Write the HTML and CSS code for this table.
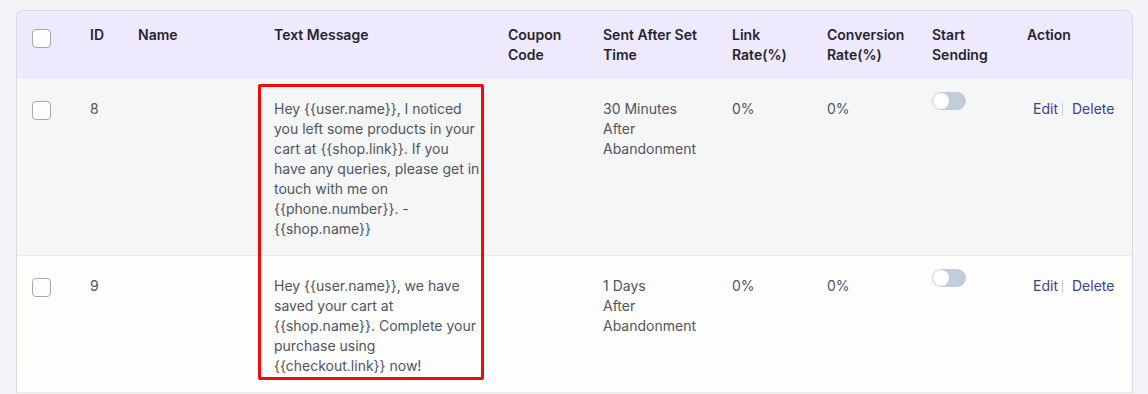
FILE: index.html
```html
<!DOCTYPE html>
<html lang="en">
<head>
<meta charset="utf-8">
<title>Abandoned Cart Messages</title>
<link rel="stylesheet" href="styles.css">
</head>
<body>
<div class="card">
  <table class="msg-table">
    <colgroup>
      <col class="c-check"><col class="c-id"><col class="c-name"><col class="c-text">
      <col class="c-coupon"><col class="c-sent"><col class="c-link"><col class="c-conv">
      <col class="c-start"><col class="c-action">
    </colgroup>
    <thead>
      <tr>
        <th class="cell-check"><span class="checkbox"></span></th>
        <th>ID</th>
        <th>Name</th>
        <th>Text Message</th>
        <th>Coupon Code</th>
        <th>Sent After Set Time</th>
        <th>Link Rate(%)</th>
        <th>Conversion Rate(%)</th>
        <th>Start Sending</th>
        <th>Action</th>
      </tr>
    </thead>
    <tbody>
      <tr class="row-odd">
        <td class="cell-check"><span class="checkbox"></span></td>
        <td>8</td>
        <td></td>
        <td class="cell-text">Hey {{user.name}}, I noticed you left some products in your cart at {{shop.link}}. If you have any queries, please get in touch with me on {{phone.number}}. - {{shop.name}}</td>
        <td></td>
        <td>30 Minutes<br>After Abandonment</td>
        <td>0%</td>
        <td>0%</td>
        <td><span class="toggle"><span class="knob"></span></span></td>
        <td><div class="actions"><a class="act">Edit</a><span class="sep"></span><a class="act">Delete</a></div></td>
      </tr>
      <tr class="row-even">
        <td class="cell-check"><span class="checkbox"></span></td>
        <td>9</td>
        <td></td>
        <td class="cell-text">Hey {{user.name}}, we have saved your cart at {{shop.name}}. Complete your purchase using {{checkout.link}} now!</td>
        <td></td>
        <td>1 Days<br>After Abandonment</td>
        <td>0%</td>
        <td>0%</td>
        <td><span class="toggle"><span class="knob"></span></span></td>
        <td><div class="actions"><a class="act">Edit</a><span class="sep"></span><a class="act">Delete</a></div></td>
      </tr>
    </tbody>
  </table>
  <div class="highlight"></div>
</div>
</body>
</html>
```

FILE: styles.css
```css
* { box-sizing: border-box; }

body {
  margin: 0;
  padding: 10px 16px 0;
  background: #f3f3f8;
  font-family: Inter, "Noto Sans", sans-serif;
  font-size: 14px;
  line-height: 20px;
  color: #50555e;
}

.card {
  position: relative;
  width: 1117px;
  border: 1px solid #d9d9df;
  border-bottom: none;
  border-radius: 8px 8px 0 0;
  overflow: hidden;
  background: #fdfdfb;
}

.msg-table {
  width: 1115px;
  border-collapse: collapse;
  table-layout: fixed;
}

.c-check { width: 57px; }
.c-id { width: 48px; }
.c-name { width: 136px; }
.c-text { width: 234px; }
.c-coupon { width: 95px; }
.c-sent { width: 129px; }
.c-link { width: 95px; }
.c-conv { width: 105px; }
.c-start { width: 95px; }
.c-action { width: 121px; }

.msg-table th,
.msg-table td {
  text-align: left;
  vertical-align: top;
  padding: 0 8px 0 16px;
}

.msg-table thead th {
  background: #eee9fd;
  color: #25262d;
  font-weight: 600;
  padding-top: 14px;
  padding-bottom: 14px;
  height: 68px;
}

.msg-table tbody td {
  padding-top: 20px;
  padding-bottom: 16px;
}

.msg-table th.cell-check,
.msg-table td.cell-check {
  padding-left: 15px;
  padding-right: 0;
}

.msg-table td.cell-text {
  padding-right: 12px;
}

.row-odd td {
  background: #f5f6f6;
  border-bottom: 1px solid #ebebeb;
}

.row-even td {
  background: #fdfdfb;
  border-bottom: 1px solid #ebebeb;
}

.checkbox {
  display: block;
  width: 19px;
  height: 19px;
  margin-top: 4px;
  border: 1px solid #a3a8b2;
  border-radius: 4px;
  background: #ffffff;
}

.msg-table tbody .checkbox {
  margin-top: 2px;
}

.toggle {
  position: relative;
  display: block;
  width: 34px;
  height: 18px;
  margin-top: -7px;
  border-radius: 9px;
  background: #c3ccdb;
}

.knob {
  position: absolute;
  left: 1px;
  top: 1px;
  width: 16px;
  height: 16px;
  border-radius: 50%;
  background: #ffffff;
}

.actions {
  display: flex;
  align-items: center;
  padding-left: 6px;
}

.act {
  color: #3f3d8d;
  cursor: pointer;
}

.sep {
  width: 1px;
  height: 13px;
  margin: 0 9px 0 4px;
  background: #c9c9cf;
}

.highlight {
  position: absolute;
  left: 241px;
  top: 73px;
  width: 226px;
  height: 296px;
  border: 3px solid #f20a0a;
  border-radius: 2px;
  pointer-events: none;
}
```
